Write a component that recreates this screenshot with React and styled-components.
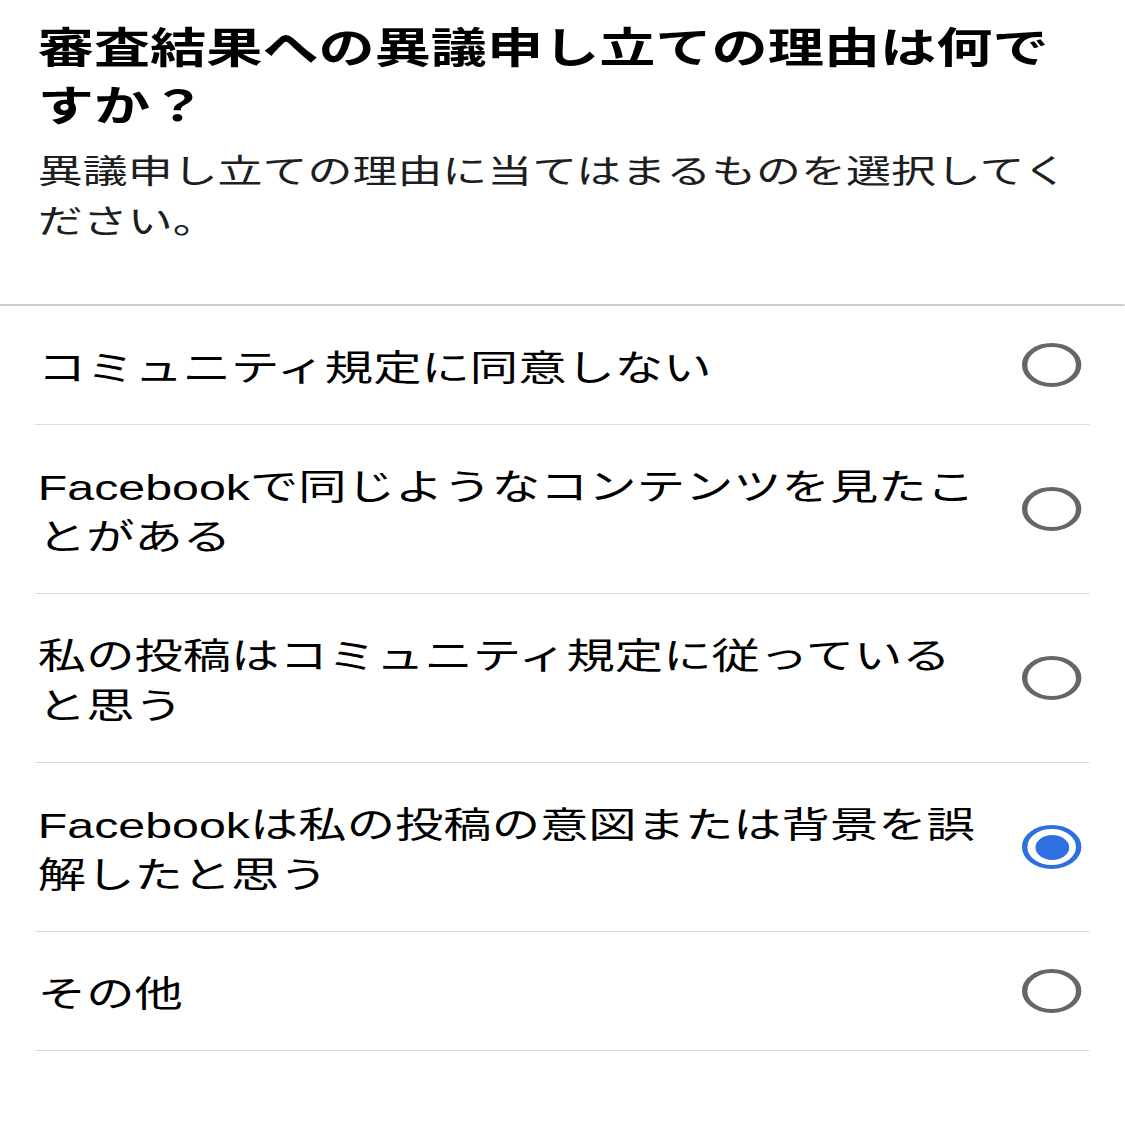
import styled, { createGlobalStyle } from "styled-components";

// the reference is a phone screenshot stretched sideways, so the page is laid
// out at its natural width and widened once as a whole
const STRETCH = 1.35;

const GlobalStyle = createGlobalStyle`
    html, body {
        margin: 0;
        padding: 0;
        background: #fff;
        overflow: hidden;
    }
    body {
        font-family: "Liberation Sans", "Noto Sans CJK JP", sans-serif;
        color: #000;
    }
`;

const Page = styled.div`
    width: ${1125 / STRETCH}px;
    transform: scaleX(${STRETCH});
    transform-origin: top left;
    padding-top: 20px;
`;

const Header = styled.div`
    display: flex;
    flex-direction: column;
    gap: 11px;
    padding: 0 28px 57px;
    border-bottom: 2px solid #cfcfcf;
`;

const Title = styled.h1`
    margin: 0;
    font-size: 41.6px;
    line-height: 58px;
    font-weight: 700;
    white-space: nowrap;
`;

const Subtitle = styled.p`
    margin: 0;
    font-size: 33.3px;
    line-height: 50px;
    color: #1c1e21;
    white-space: nowrap;
`;

const List = styled.div`
    display: flex;
    flex-direction: column;
    margin: 0 26px;
`;

const Row = styled.label`
    display: flex;
    align-items: center;
    gap: 12px;
    padding: 30px 6px 30px 2px;
    border-bottom: 1.5px solid #dcdcdc;
`;

const RowText = styled.span`
    flex: 1;
    padding-top: 8px;
    font-size: 35.8px;
    line-height: 50px;
    white-space: nowrap;
`;

const Radio = styled.span`
    flex: none;
    width: 44px;
    height: 44px;
    box-sizing: border-box;
    border-radius: 50%;
    border: 4px solid ${({ $checked }) => ($checked ? "#2f6fdf" : "#666")};
    display: flex;
    align-items: center;
    justify-content: center;

    &::after {
        content: "";
        display: ${({ $checked }) => ($checked ? "block" : "none")};
        width: 25px;
        height: 25px;
        border-radius: 50%;
        background: #2f6fdf;
    }
`;

const options = [
    { lines: ["コミュニティ規定に同意しない"] },
    { lines: ["Facebookで同じようなコンテンツを見たこ", "とがある"] },
    { lines: ["私の投稿はコミュニティ規定に従っている", "と思う"] },
    {
        lines: ["Facebookは私の投稿の意図または背景を誤", "解したと思う"],
        checked: true,
    },
    { lines: ["その他"] },
];

export default function App() {
    return (
        <>
            <GlobalStyle />
            <Page>
                <Header>
                    <Title>
                        審査結果への異議申し立ての理由は何で
                        <br />
                        すか？
                    </Title>
                    <Subtitle>
                        異議申し立ての理由に当てはまるものを選択してく
                        <br />
                        ださい。
                    </Subtitle>
                </Header>
                <List>
                    {options.map((o, i) => (
                        <Row key={i}>
                            <RowText>
                                {o.lines.map((l, j) => (
                                    <span key={j}>
                                        {j > 0 && <br />}
                                        {l}
                                    </span>
                                ))}
                            </RowText>
                            <Radio $checked={o.checked} />
                        </Row>
                    ))}
                </List>
            </Page>
        </>
    );
}
